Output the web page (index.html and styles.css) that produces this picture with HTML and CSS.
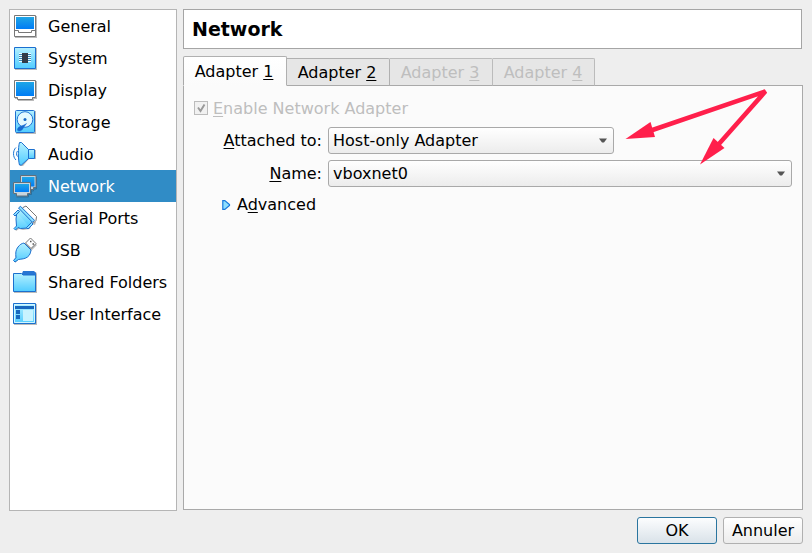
FILE: index.html
```html
<!DOCTYPE html>
<html lang="en">
<head>
<meta charset="utf-8">
<title>Settings</title>
<link rel="stylesheet" href="styles.css">
</head>
<body>
<svg class="defs" width="0" height="0" aria-hidden="true">
  <defs>
    <linearGradient id="screen" x1="0" y1="0" x2="0" y2="1"><stop offset="0" stop-color="#1fa6e6"/><stop offset="1" stop-color="#007cf5"/></linearGradient>
    <linearGradient id="aqua" x1="0" y1="0" x2="0" y2="1"><stop offset="0" stop-color="#b4f0ff"/><stop offset="1" stop-color="#51ccff"/></linearGradient>
  </defs>
</svg>
<div class="dialog">
  <main class="content">
    <ul class="sidebar">
      <li><svg viewBox="0 0 30 32"><path class="shadow" d="M5 6h22v22H5z"/><path d="M4.500 5.500h21v21h-21z" fill="#fff" stroke="#777"/><path d="M6 7h18v12H6z" fill="url(#screen)"/><path d="M4.500 20.500h4v2h13v-2h4" fill="none" stroke="#777"/></svg>General</li>
      <li><svg viewBox="0 0 30 32"><path class="shadow" d="M5 6h22v22H5z"/><path d="M4.500 5.500h21v21h-21z" fill="url(#aqua)" stroke="#1b6fd0"/><path d="M9 11.500h12M9 13.500h12M9 15.500h12M9 17.500h12M9 19.500h12" stroke="#eefcff"/><path d="M9 12.500h12M9 14.500h12M9 16.500h12M9 18.500h12" stroke="#3a86b4"/><path d="M12 11h6v10h-6z" fill="#333b47"/></svg>System</li>
      <li><svg viewBox="0 0 30 32"><path class="shadow" d="M5 7h22v18h-3v2H8v-2H5z"/><path d="M4.500 6.500h21v17h-3v2h-15v-2h-3z" fill="#fff" stroke="#777"/><path d="M6 8h18v14H6z" fill="url(#screen)"/></svg>Display</li>
      <li><svg viewBox="0 0 30 32"><path class="shadow" d="M6 5h20v23H6z"/><rect x="5.500" y="4.500" width="19" height="22" rx="1" fill="url(#aqua)" stroke="#1f6fd0"/><circle cx="15" cy="13.500" r="7.800" fill="#e4f9ff" stroke="#2475d5"/><circle cx="15" cy="13.500" r="1.500" fill="#1767c5"/><path d="M16.500 17.500c-2 1.800-4.500 2-7 3.300-2.500 1.500-2.800 4.200-.5 4.200 2.500 0 3.500-1.500 4.500-3.500z" fill="#1769d0" stroke="#1769d0" stroke-width=".500"/></svg>Storage</li>
      <li><svg viewBox="0 0 30 32"><path class="shadow" d="M10 6h3l6 6h7v9h-7l-6 7h-3z"/><path d="M17.500 11.500h7v9h-7z" fill="url(#aqua)" stroke="#1d70ce"/><path d="M9.500 4.500h2l7 7v9l-7 6.500h-2c-1.500-5-1.500-17.500 0-22.500z" fill="url(#aqua)" stroke="#1d70ce"/><path d="M6 9.500c-3.300 3-3.300 9.500 0 12.500M7.500 13c-1.300 1.500-1.300 4 0 5.500" fill="none" stroke="#1d78d4"/></svg>Audio</li>
      <li class="selected"><svg viewBox="0 0 30 32"><path d="M26.500 7v12h-3v2h-3M21.500 14v10.500h-3v2.500h-12" fill="none" stroke="#2a6f9b"/><path d="M10.500 5.500h15.500v12h-2.500v2h-10.500v-2h-2.500z" fill="#c6d5df" stroke="#63707a"/><path d="M12 7h12.500v9.500H12z" fill="url(#screen)"/><path d="M3.500 12.500h17v11h-3v2.500h-11v-2.500h-3z" fill="#c6d5df" stroke="#63707a"/><path d="M5 14h14v8H5z" fill="url(#screen)"/></svg>Network</li>
      <li><svg viewBox="0 0 30 32"><path class="shadow" d="M10 5l3 2 13 13-1 3-3-1-2 5-7 1-4-1-3 2-1-2 2-2z"/><path d="M13 5.500l3-1.500 10.500 10.500-.5 4-2 2L11.500 8z" fill="#fff" stroke="#777"/><path d="M7 9.500l12.500 12.500-2 4-7 .500-2.500-1-2.500 2.500-1.500-1.500 2.500-2.500-.500-7z" fill="url(#aqua)" stroke="#1d70ce"/><path d="M7 10.500l3-3 11.500 11.500-3 5z" fill="url(#aqua)"/><path d="M8.500 6l2-1.700 14 14-2 2zM3.500 12.500L8 8l1.500 1.500L5 14zM16.500 25.500l5-5 1.500 1.500-5 5z" fill="#8bdfff" stroke="#1d70ce"/></svg>Serial Ports</li>
      <li><svg viewBox="0 0 30 32"><path class="shadow" d="M20 5l7 6-6 6-4 6-8 2-4 4v-4l2-9 7-5z"/><path d="M15.500 9l5-5 5.500 5.500-5 5z" fill="#fff" stroke="#777"/><path d="M20 7.500h1.500M22.500 10H24" stroke="#555" stroke-width="1.500"/><path d="M14 9l7 7c-.5 3-1 5-3.500 7-2.500 2-6 2-9 2.500L5 28l-1.500-1.500 2.500-3c-.5-4-.5-7.500 2-10.500 2-2.500 3.500-3.500 6-4z" fill="url(#aqua)" stroke="#1d70ce"/></svg>USB</li>
      <li><svg viewBox="0 0 30 32"><path class="shadow" d="M4 9h8l2-3h12l1 2v19H4z"/><path d="M11 10l2-5h11l2 2v3z" fill="#2875d2"/><path d="M3.500 7.500h8l1.500 1.500h12.500v16.500h-22z" fill="url(#aqua)" stroke="#1b70ce"/></svg>Shared Folders</li>
      <li><svg viewBox="0 0 30 32"><path class="shadow" d="M4 6h23v21H4z"/><path d="M3.500 5.500h22v20h-22z" fill="url(#aqua)" stroke="#1b70ce"/><path d="M4.500 6.500h20v18h-20z" fill="none" stroke="#d1f6ff"/><path d="M5 8h19v3H5zM6 12h4v4H6zM6 17h4v4H6z" fill="#1867bd"/><path d="M13 12h10v11H13z" fill="#c8f3ff"/></svg>User Interface</li>
    </ul>
    <section class="page">
      <h1>Network</h1>
      <nav class="tabs">
        <span class="tab active">Adapter&nbsp;<u>1</u></span>
        <span class="tab">Adapter&nbsp;<u>2</u></span>
        <span class="tab disabled">Adapter&nbsp;<u>3</u></span>
        <span class="tab disabled last">Adapter&nbsp;<u>4</u></span>
      </nav>
      <div class="panel">
        <div class="enable"><span class="check"><svg viewBox="0 0 12 12"><path d="M3 5.500l2.500 3.500L9.500 2.500" fill="none" stroke="#999" stroke-width="1.900"/></svg></span><span><u>E</u>nable Network Adapter</span></div>
        <div class="form">
          <label><u>A</u>ttached to:</label>
          <div class="combo short">Host-only Adapter<svg viewBox="0 0 8 5"><path d="M0 .500h8L5 4.500H3z" fill="#555"/></svg></div>
          <label><u>N</u>ame:</label>
          <div class="combo">vboxnet0<svg viewBox="0 0 8 5"><path d="M0 .500h8L5 4.500H3z" fill="#555"/></svg></div>
        </div>
        <div class="advanced"><svg viewBox="0 0 9 10"><path d="M.800.600h2L7.500 4.500v1L2.800 9.400h-2z" fill="#8edfff" stroke="#1878dc" stroke-width="1.200"/></svg><span>A<u>d</u>vanced</span></div>
      </div>
    </section>
  </main>
  <footer class="buttons"><button class="primary">OK</button><button>Annuler</button></footer>
</div>
<svg class="arrows" viewBox="0 0 150 80"><g fill="#ff1f4b"><path d="M5.500 49l25-17 4.500 15z"/><path d="M80 74.500l13.500-26.500 11 10z"/></g><path d="M31 40.500L145.500 1.300 98 55" fill="none" stroke="#ff1f4b" stroke-width="4.500" stroke-linejoin="bevel"/></svg>
</body>
</html>
```
FILE: styles.css
```css
* { box-sizing: border-box; }

body {
  margin: 0;
  background: #eee;
  color: #000;
  font: 16px/20px "DejaVu Sans", sans-serif;
  overflow: hidden;
}

u {
  text-decoration: underline;
  text-decoration-thickness: 1px;
  text-underline-offset: 2px;
}

svg { display: block; flex: none; }
.defs { position: absolute; }

.dialog {
  width: 812px;
  height: 553px;
  padding: 9px;
}

.content {
  display: flex;
  gap: 6px;
  height: 502px;
}

.sidebar {
  width: 168px;
  margin: 0;
  padding: 0;
  list-style: none;
  background: #fff;
  border: 1px solid #b5b5b5;
}

.sidebar li {
  display: flex;
  align-items: center;
  gap: 8px;
  height: 32px;
  padding-top: 2px;
  white-space: nowrap;
}

.sidebar svg { width: 30px; height: 32px; margin-top: -2px; }
.sidebar .selected { background: #308cc6; color: #fff; }
.shadow { fill: #bbb; }

.page {
  display: flex;
  flex-direction: column;
  width: 620px;
  height: 501px;
}

h1 {
  flex: none;
  width: 619px;
  height: 40px;
  margin: 0 0 7px;
  padding: 0 8px;
  border: 1px solid #a5a5a5;
  background: #fff;
  font-size: 19px;
  line-height: 38px;
}

.tabs {
  display: flex;
  align-items: flex-end;
  height: 30px;
}

.tabs::after {
  content: "";
  flex: 1;
  border-bottom: 1px solid #a9a9a9;
}

.tab {
  width: 103px;
  height: 28px;
  padding: 4px 2px 0 0;
  border: 1px solid #b0b0b0;
  border-left: 0;
  border-bottom-color: #a9a9a9;
  border-radius: 0 2px 0 0;
  background: #e6e6e6;
  text-align: center;
}

.tab.active {
  width: 104px;
  height: 30px;
  padding-top: 5px;
  border-left: 1px solid #a9a9a9;
  border-bottom-color: #fbfbfb;
  border-radius: 2px 2px 0 0;
  background: linear-gradient(#fff, #fbfbfb);
}

.tab.last { width: 102px; padding-right: 1px; }

.disabled, .enable { color: #bebebe; }
.disabled { border-color: #bbb #bbb #a9a9a9; }

.panel {
  flex: 1;
  border: 1px solid #a9a9a9;
  border-top: 0;
  padding: 12px 10px 0;
  background: #fbfbfb;
}

.enable {
  display: flex;
  align-items: flex-start;
  gap: 5px;
  height: 20px;
  padding-top: 1px;
}

.check {
  width: 14px;
  height: 14px;
  margin-top: 2px;
  border: 1px solid #bcbcbc;
  background: #f1f1f1;
}

.check svg { width: 12px; height: 12px; }

.form {
  display: grid;
  grid-template-columns: 128px 464px;
  gap: 6px;
  margin-top: 9px;
}

label { text-align: right; line-height: 27px; }

.combo {
  display: flex;
  align-items: center;
  justify-content: space-between;
  height: 27px;
  padding: 0 6px 0 4px;
  border: 1px solid #a9a9a9;
  border-radius: 3px;
  background: linear-gradient(#fff, #ececec);
}

.combo.short { width: 286px; }
.combo svg { width: 8px; height: 5px; }

.advanced {
  display: flex;
  align-items: center;
  gap: 6px;
  margin: 8px 0 0 28px;
}

.advanced svg { width: 9px; height: 10px; margin-top: -1px; }

.buttons {
  display: flex;
  justify-content: flex-end;
  gap: 6px;
  margin-top: 6px;
}

button {
  width: 80px;
  height: 27px;
  padding: 0;
  border: 1px solid #b0b0b0;
  border-radius: 3px;
  background: linear-gradient(#fff, #ececec);
  color: #000;
  font: inherit;
}

.primary {
  border-color: #2a759f;
  background: linear-gradient(#fcfdfe, #d9e2e9);
}

/* Annotation drawn over the form */
.arrows {
  position: absolute;
  left: 620px;
  top: 90px;
  width: 150px;
  height: 80px;
  overflow: visible;
}
```
